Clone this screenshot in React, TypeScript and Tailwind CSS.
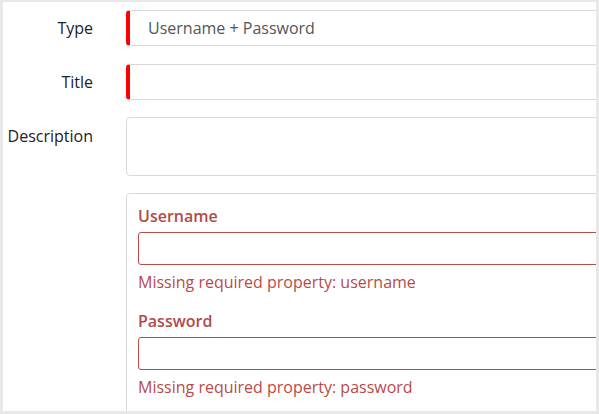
import React from "react";

export default function App() {
  const font = { fontFamily: '"Open Sans", "Liberation Sans", sans-serif' };
  return (
    <div className="w-[599px] h-[414px] bg-[#e8e8e8] pt-[2px] pl-[3px] pr-[3px] pb-[3px]" style={font}>
      <div className="w-full h-full bg-white overflow-hidden pt-[8px]">
        {/* Type */}
        <div className="flex items-center h-[36px]">
          <div className="w-[90px] shrink-0 text-right text-[16px] text-[#222]">Type</div>
          <div className="ml-[33px] w-[490px] h-[36px] shrink-0 border border-[#d9d9d9] border-l-[4px] border-l-[#ff0000] rounded-[4px] flex items-center pl-[18px] text-[16px] text-[#555]">
            Username + Password
          </div>
        </div>
        {/* Title */}
        <div className="flex items-center h-[36px] mt-[18px]">
          <div className="w-[90px] shrink-0 text-right text-[16px] text-[#222]">Title</div>
          <div className="ml-[33px] w-[490px] h-[36px] shrink-0 border border-[#d9d9d9] border-l-[4px] border-l-[#ff0000] rounded-[4px]" />
        </div>
        {/* Description */}
        <div className="flex items-start mt-[17px]">
          <div className="w-[90px] shrink-0 text-right text-[16px] leading-[24px] text-[#222] pt-[7px]">Description</div>
          <div className="ml-[33px] w-[490px] h-[59px] shrink-0 border border-[#d9d9d9] rounded-[4px]" />
        </div>
        {/* Credentials */}
        <div className="flex mt-[17px]">
          <div className="w-[90px] shrink-0" />
          <div className="ml-[33px] w-[490px] shrink-0 h-[240px] border border-[#d9d9d9] rounded-[4px] pl-[11px] pt-[11px]">
            <div className="text-[16px] font-semibold text-[#b24a48] leading-[22px]">Username</div>
            <div className="mt-[5px] w-[480px] h-[33px] border border-[#b94a48] rounded-[3px]" />
            <div className="mt-[6px] text-[16px] text-[#b94a48] leading-[22px]">Missing required property: username</div>
            <div className="mt-[17px] text-[16px] font-semibold text-[#b24a48] leading-[22px]">Password</div>
            <div className="mt-[5px] w-[480px] h-[33px] border border-[#b94a48] rounded-[3px]" />
            <div className="mt-[6px] text-[16px] text-[#b94a48] leading-[22px]">Missing required property: password</div>
          </div>
        </div>
      </div>
    </div>
  );
}
